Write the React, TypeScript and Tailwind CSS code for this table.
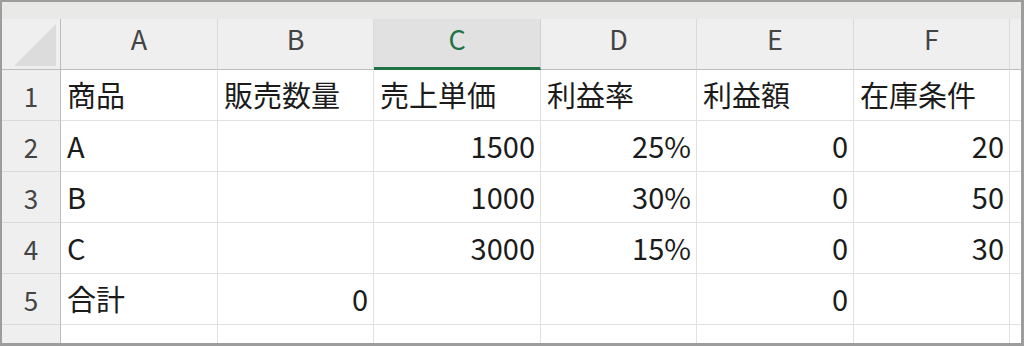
const cols = ["A", "B", "C", "D", "E", "F"];

type Cell = { v: string; right?: boolean };

const rows: Cell[][] = [
  [{ v: "商品" }, { v: "販売数量" }, { v: "売上単価" }, { v: "利益率" }, { v: "利益額" }, { v: "在庫条件" }],
  [{ v: "A" }, { v: "" }, { v: "1500", right: true }, { v: "25%", right: true }, { v: "0", right: true }, { v: "20", right: true }],
  [{ v: "B" }, { v: "" }, { v: "1000", right: true }, { v: "30%", right: true }, { v: "0", right: true }, { v: "50", right: true }],
  [{ v: "C" }, { v: "" }, { v: "3000", right: true }, { v: "15%", right: true }, { v: "0", right: true }, { v: "30", right: true }],
  [{ v: "合計" }, { v: "0", right: true }, { v: "" }, { v: "" }, { v: "0", right: true }, { v: "" }],
  [{ v: "" }, { v: "" }, { v: "" }, { v: "" }, { v: "" }, { v: "" }],
];

const font = { fontFamily: '"Noto Sans CJK JP", "Noto Sans", sans-serif' };

export default function App() {
  return (
    <div
      className="w-[1024px] h-[346px] overflow-hidden bg-white border-2 border-r-[3px] border-b-[3px] border-[#9d9d9d] flex flex-col"
      style={font}
    >
      <div className="h-[17px] shrink-0 bg-[#e9e9e7]" />
      <div className="grid grid-cols-[59px_157px_156px_167px_156px_157px_156px_1fr] auto-rows-[51px]">
        {/* header row */}
        <div className="bg-[#efefef] border-r border-b border-[#bdbdbd] flex items-end justify-end pb-[3px] pr-[2px]">
          <svg width="44" height="42" viewBox="0 0 44 42">
            <polygon points="42,0 42,42 0,42" fill="#dcdcdc" />
          </svg>
        </div>
        {cols.map((c) =>
          c === "C" ? (
            <div
              key={c}
              className="bg-[#e1e1e1] border-r border-b-[3px] border-r-[#d0d0d0] border-b-[#217346] flex items-center justify-center text-[27px] leading-none text-[#217346] pb-[10px]"
            >
              {c}
            </div>
          ) : (
            <div
              key={c}
              className="bg-[#efefef] border-r border-b border-r-[#dadada] border-b-[#bdbdbd] flex items-center justify-center text-[27px] leading-none text-[#444] pb-[12px]"
            >
              {c}
            </div>
          )
        )}
        <div className="bg-[#efefef] border-b border-[#bdbdbd]" />

        {rows.map((r, i) => (
          <Row key={i} n={i + 1} cells={r} />
        ))}
      </div>
    </div>
  );
}

function Row({ n, cells }: { n: number; cells: Cell[] }) {
  return (
    <>
      <div className="bg-[#efefef] border-r border-b border-r-[#bdbdbd] border-b-[#dadada] flex items-center justify-center text-[26px] leading-none text-[#444] pt-[2px]">
        {n}
      </div>
      {cells.map((c, j) => (
        <div
          key={j}
          className={
            "border-r border-b border-[#e1e1e1] flex items-center text-[29px] leading-none text-[#1b1b1b] pb-[2px] whitespace-nowrap " +
            (c.right ? "justify-end pr-[5px]" : "pl-[6px]")
          }
        >
          {c.v}
        </div>
      ))}
      <div className="border-b border-[#e1e1e1]" />
    </>
  );
}
